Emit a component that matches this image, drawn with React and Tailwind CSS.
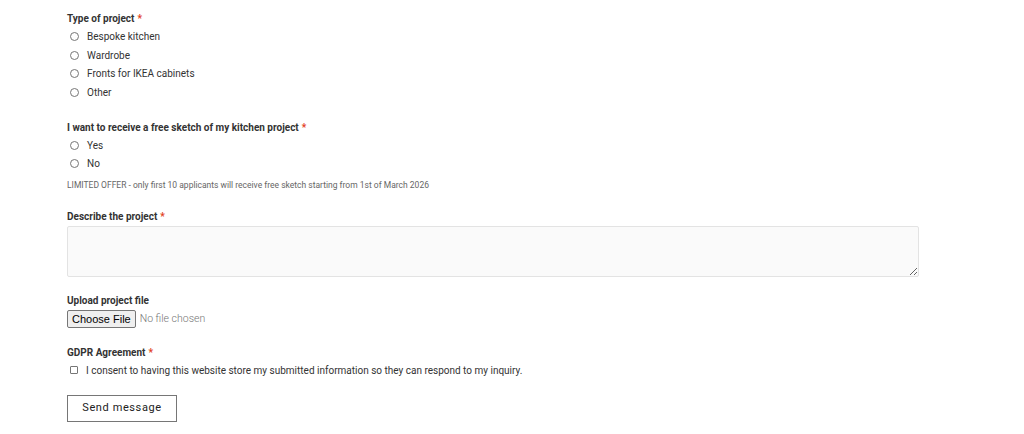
import React from 'react';

function Label({ children, required }) {
  return (
    <div className="text-[10px] font-bold text-[#333] leading-[14px]">
      {children}
      {required && <span className="text-[#e2401c] ml-[3px]">*</span>}
    </div>
  );
}

function Radio({ label }) {
  return (
    <label className="flex items-center h-[18.7px] text-[10px] text-[#333]">
      <span className="ml-[3px] w-[9px] h-[9px] rounded-full border border-[#767676] bg-white" />
      <span className="ml-[8px]">{label}</span>
    </label>
  );
}

export default function App() {
  return (
    <div className="w-[1024px] h-[434px] bg-white overflow-hidden" style={{ fontFamily: 'Roboto, "Liberation Sans", sans-serif' }}>
      <div className="pl-[67px] pt-[12px] w-[919px]">
        <Label required>Type of project</Label>
        <div className="mt-[1px]">
          {['Bespoke kitchen', 'Wardrobe', 'Fronts for IKEA cabinets', 'Other'].map(o => <Radio key={o} label={o} />)}
        </div>

        <div className="mt-[19px]">
          <Label required>I want to receive a free sketch of my kitchen project</Label>
        </div>
        <div className="mt-[1px]">
          {['Yes', 'No'].map(o => <Radio key={o} label={o} />)}
        </div>
        <div className="mt-[7px] text-[8.5px] text-[#666] leading-[10px]">
          LIMITED OFFER - only first 10 applicants will receive free sketch starting from 1st of March 2026
        </div>

        <div className="mt-[20px]">
          <Label required>Describe the project</Label>
        </div>
        <textarea className="block mt-[2px] w-[852px] h-[51px] bg-[#fafafa] border border-[#e3e3e3] rounded-[2px] outline-none" />

        <div className="mt-[17px]">
          <Label>Upload project file</Label>
        </div>
        <div className="flex items-center mt-[2px] h-[18px]">
          <button className="h-[18px] px-[4px] text-[11px] text-black bg-[#efefef] border border-[#767676] rounded-[2px] leading-none" style={{ fontFamily: '"Liberation Sans", Arial, sans-serif' }}>Choose File</button>
          <span className="ml-[4px] text-[10.5px] text-[#757575] font-light">No file chosen</span>
        </div>

        <div className="mt-[18px]">
          <Label required>GDPR Agreement</Label>
        </div>
        <label className="flex items-center mt-[3px] h-[14px] text-[10px] text-[#333]">
          <span className="ml-[3px] w-[8px] h-[8px] rounded-[1px] border border-[#767676] bg-white" />
          <span className="ml-[8px]">I consent to having this website store my submitted information so they can respond to my inquiry.</span>
        </label>

        <button className="mt-[18px] w-[110px] h-[27px] border border-[#767676] bg-white text-[11px] text-[#222] tracking-[0.6px]">
          Send message
        </button>
      </div>
    </div>
  );
}
